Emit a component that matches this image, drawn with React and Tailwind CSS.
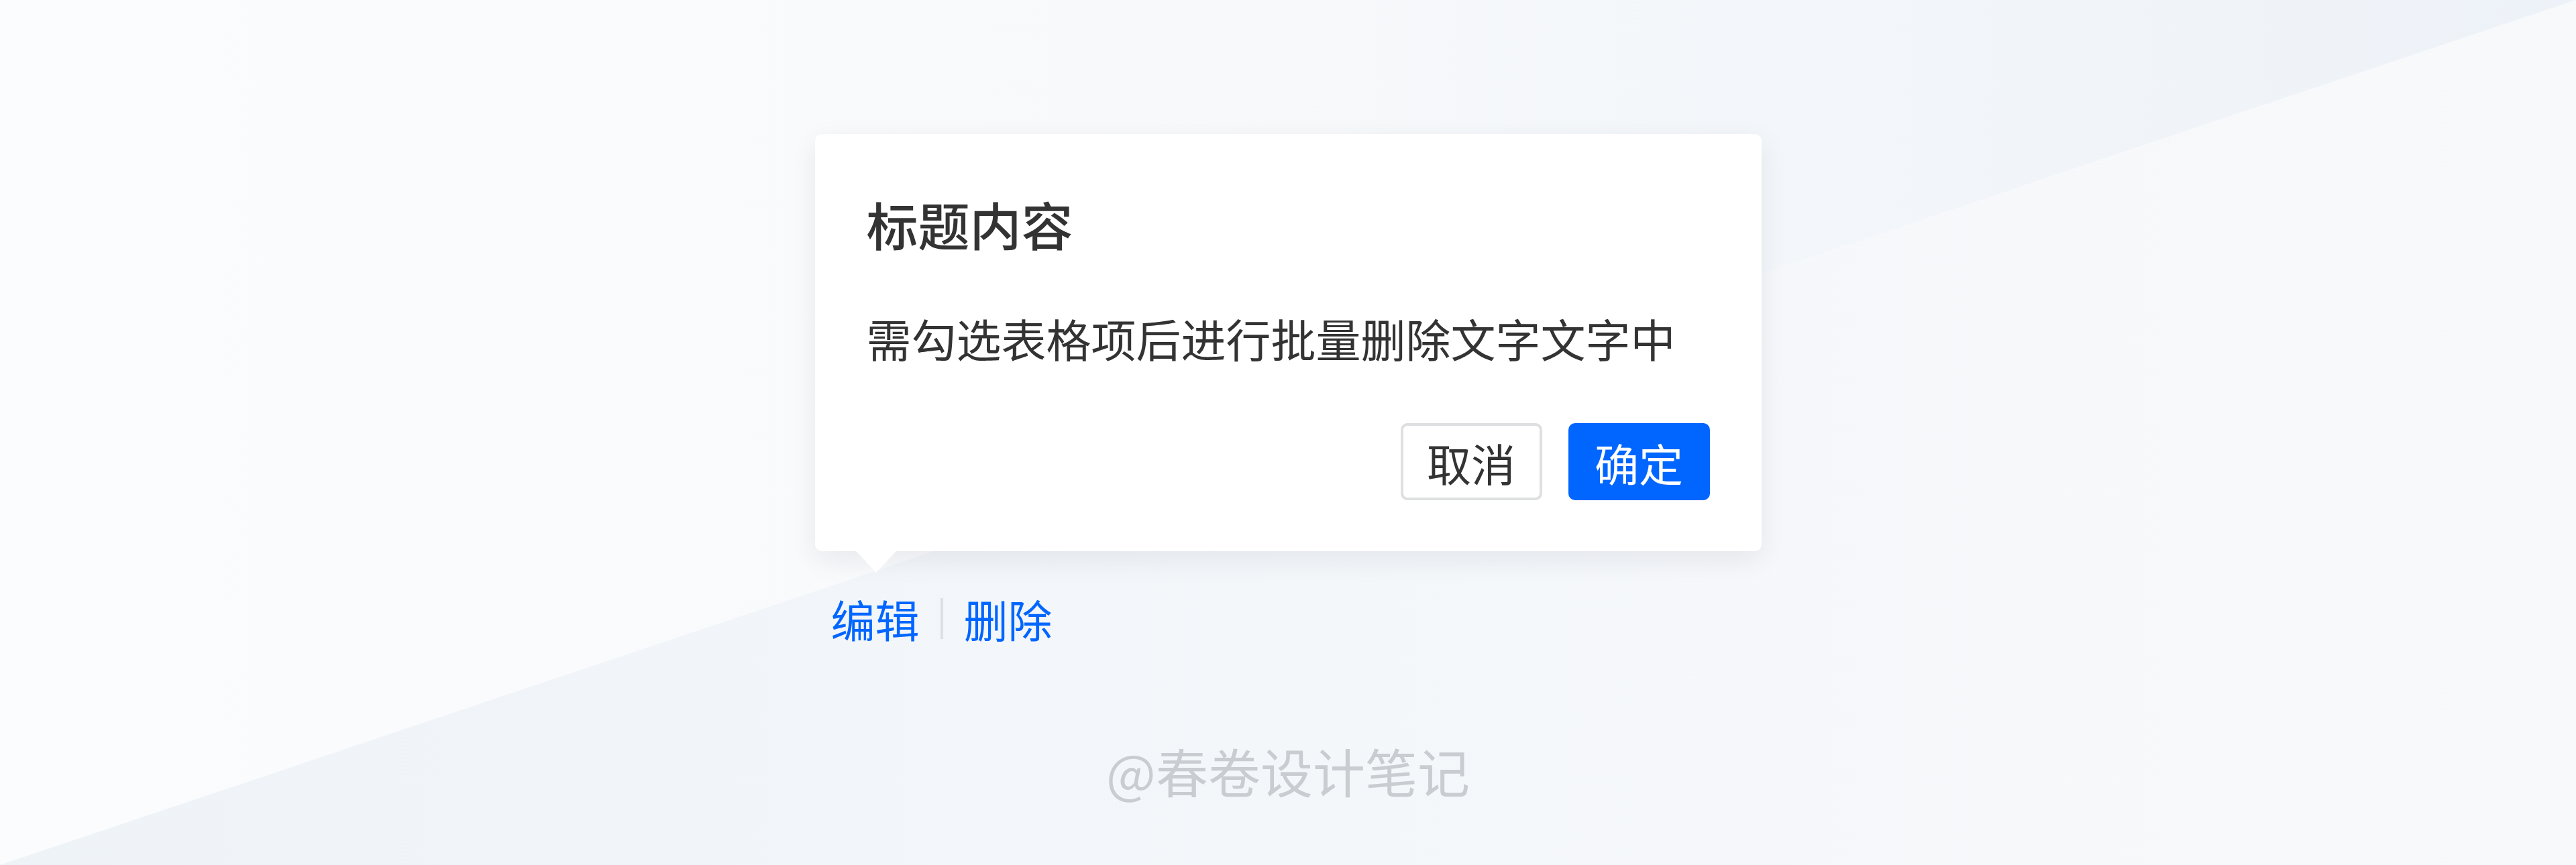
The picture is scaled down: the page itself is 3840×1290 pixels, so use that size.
import React from "react";

const font = { fontFamily: '"Noto Sans CJK SC", "Noto Sans", sans-serif' };

function Backdrop() {
  return (
    <svg className="absolute inset-0 h-full w-full" viewBox="0 0 3840 1290" preserveAspectRatio="none">
      <defs>
        <linearGradient id="upper" x1="0" y1="0" x2="1" y2="0">
          <stop offset="0" stopColor="#fbfcfd" />
          <stop offset="0.5" stopColor="#f7f9fb" />
          <stop offset="1" stopColor="#edf2f8" />
        </linearGradient>
        <linearGradient id="lower" x1="0" y1="0" x2="1" y2="0">
          <stop offset="0" stopColor="#eef3f8" />
          <stop offset="0.5" stopColor="#f4f7fa" />
          <stop offset="1" stopColor="#f8f9fb" />
        </linearGradient>
      </defs>
      <polygon points="0,0 3840,0 0,1290" fill="url(#upper)" />
      <polygon points="3840,0 3840,1290 0,1290" fill="url(#lower)" />
    </svg>
  );
}

export default function App() {
  return (
    <div className="relative h-[1290px] w-[3840px] overflow-hidden bg-[#f6f8fa]" style={font}>
      <Backdrop />

      <div className="relative flex flex-col items-center pt-[200px]">
        <div className="flex w-[1411px] flex-col items-start">
          {/* popconfirm */}
          <div className="relative w-full rounded-[10px] bg-white px-[77px] pt-[95px] pb-[76px] shadow-[0_12px_40px_rgba(20,30,50,0.08)]">
            <h2 className="text-[77px] font-medium leading-none text-[#333333]">标题内容</h2>
            <p className="mt-[98px] text-[67px] leading-none text-[#333333]">需勾选表格项后进行批量删除文字文字中</p>
            <div className="mt-[94px] flex justify-end gap-[39px]">
              <button className="flex h-[115px] w-[211px] items-center justify-center rounded-[10px] border-[4px] border-[#dedfe1] bg-white text-[66px] leading-none text-[#333333]">
                取消
              </button>
              <button className="flex h-[115px] w-[211px] items-center justify-center rounded-[10px] bg-[#0066ff] text-[66px] leading-none text-white">
                确定
              </button>
            </div>
            <svg className="absolute left-[61px] top-full" width="60" height="32" viewBox="0 0 60 32">
              <polygon points="0,0 60,0 30,32" fill="#ffffff" />
            </svg>
          </div>

          {/* table row actions */}
          <div className="mt-[67px] ml-[24px] flex items-center gap-[31px] text-[66px] leading-none text-[#0066ff]">
            <span>编辑</span>
            <span className="h-[61px] w-[4px] bg-[#dcdfe3]" />
            <span>删除</span>
          </div>
        </div>

        <div className="mt-[155px] text-[78px] leading-none text-[#c9ccd0]">@春卷设计笔记</div>
      </div>
    </div>
  );
}
